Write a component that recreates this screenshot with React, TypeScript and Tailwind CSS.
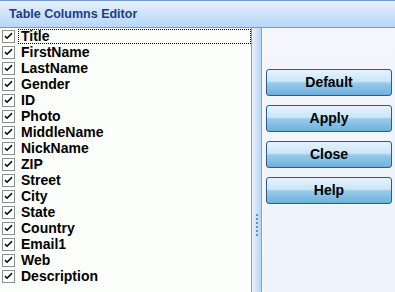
import React from "react";

const columns = [
  "Title",
  "FirstName",
  "LastName",
  "Gender",
  "ID",
  "Photo",
  "MiddleName",
  "NickName",
  "ZIP",
  "Street",
  "City",
  "State",
  "Country",
  "Email1",
  "Web",
  "Description",
];

const buttons = ["Default", "Apply", "Close", "Help"];

const CheckBox = () => (
  <span className="w-[13px] h-[13px] border border-[#8e8f8f] bg-white flex items-center justify-center shrink-0">
    <svg width="9" height="9" viewBox="0 0 9 9">
      <path d="M1 4 L3 6.2 L8 1.2" stroke="#000" strokeWidth="1.6" fill="none" />
    </svg>
  </span>
);

const App = () => {
  return (
    <div
      className="w-[395px] h-[292px] flex flex-col bg-white overflow-hidden"
      style={{ fontFamily: '"Liberation Sans", Arial, sans-serif' }}
    >
      <div className="h-[28px] shrink-0 border-t border-b border-[#6f9ad6] bg-gradient-to-b from-[#e4f0fd] to-[#b7d7f8] flex items-center pl-[9px]">
        <span className="text-[12.5px] font-bold text-[#1c3f80]">
          Table Columns Editor
        </span>
      </div>

      <div className="flex flex-1 min-h-0">
        <div className="w-[251px] shrink-0 bg-[#fcfefc] flex flex-col">
          {columns.map((col, i) => (
            <div key={col} className="h-[16px] flex items-center pl-[2px]">
              <CheckBox />
              <div
                className={`ml-[3px] flex-1 h-[15px] flex items-center pl-[2px] ${
                  i === 0 ? "border border-dotted border-black" : "border border-transparent"
                }`}
              >
                <span className="text-[14px] font-bold text-black leading-none">
                  {col}
                </span>
              </div>
            </div>
          ))}
        </div>

        <div className="w-[11px] shrink-0 border-l border-r border-[#7aa2d8] bg-gradient-to-r from-[#e8f2fd] to-[#b9d5f5] flex flex-col items-center justify-center pt-[130px]">
          <div className="flex flex-col gap-[2px]">
            {[0, 1, 2, 3, 4, 5].map((d) => (
              <span key={d} className="w-[2px] h-[2px] bg-[#5f8fd6]" />
            ))}
          </div>
        </div>

        <div className="flex-1 bg-gradient-to-b from-[#f5f5fc] to-[#edf4fc] border-l border-[#fafcff] flex flex-col gap-[9px] pt-[41px] pl-[3px] pr-[3px]">
          {buttons.map((b) => (
            <button
              key={b}
              className="h-[27px] rounded-[3px] border border-[#2c5b8c] bg-[linear-gradient(to_bottom,#e6f3fc_0%,#c9e6f7_45%,#98cbeb_52%,#6db1dc_100%)] text-[14px] font-bold text-black flex items-center justify-center"
            >
              {b}
            </button>
          ))}
        </div>
      </div>
    </div>
  );
};

export default App;
